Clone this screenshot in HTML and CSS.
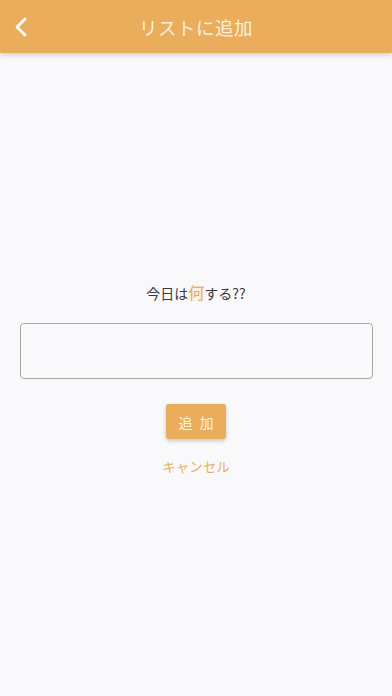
FILE: index.html
```
<!DOCTYPE html>
<html lang="ja">
<head>
<meta charset="utf-8">
<link rel="stylesheet" href="styles.css">
</head>
<body>
<header class="bar">
  <button class="back" aria-label="戻る">
    <svg width="14" height="20" viewBox="0 0 14 20"><path d="M11 2 L3 10 L11 18" fill="none" stroke="#fff" stroke-width="2.8" stroke-linecap="round" stroke-linejoin="round"/></svg>
  </button>
  <h1 class="title">リストに追加</h1>
</header>
<main class="content">
  <p class="prompt">今日は<span class="hl">何</span>する??</p>
  <div class="field"></div>
  <button class="add">追 加</button>
  <a class="cancel">キャンセル</a>
</main>
</body>
</html>
```
FILE: styles.css
```
* { box-sizing: border-box; }
html, body { margin: 0; padding: 0; }
body {
  width: 392px;
  height: 696px;
  background: #f9f9fb;
  font-family: "Noto Sans CJK JP", "Noto Sans", sans-serif;
  overflow: hidden;
}
.bar {
  position: relative;
  height: 53px;
  background: #e9ad5b;
  display: flex;
  align-items: center;
  justify-content: center;
  box-shadow: 0 2px 5px rgba(0,0,0,0.18);
}
.back {
  position: absolute;
  left: 14px;
  top: 17px;
  padding: 0;
  border: 0;
  background: none;
  display: flex;
}
.title {
  margin: 0;
  color: #fbeedb;
  font-size: 18.5px;
  font-weight: 400;
  letter-spacing: 0.5px;
}
.content {
  display: flex;
  flex-direction: column;
  align-items: center;
  padding-top: 227px;
}
.prompt {
  margin: 0;
  height: 24px;
  line-height: 24px;
  font-size: 14px;
  color: #3a3a3a;
}
.hl {
  color: #e9ad5b;
  font-size: 16px;
  text-shadow: 0 0 3px rgba(233,173,91,0.4);
}
.field {
  margin-top: 19px;
  width: 353px;
  height: 56px;
  border: 1px solid #a8a8a8;
  border-radius: 4px;
  background: #fafafc;
}
.add {
  margin-top: 25px;
  width: 60px;
  height: 35px;
  border: 0;
  border-radius: 3px;
  background: #e9ad5b;
  color: #fdf3e4;
  font-family: inherit;
  font-size: 14px;
  letter-spacing: 2px;
  padding: 0 0 0 2px;
  box-shadow: 0 2px 4px rgba(0,0,0,0.2);
}
.cancel {
  margin-top: 17px;
  color: #eab060;
  font-size: 13.5px;
  line-height: 20px;
}
```
